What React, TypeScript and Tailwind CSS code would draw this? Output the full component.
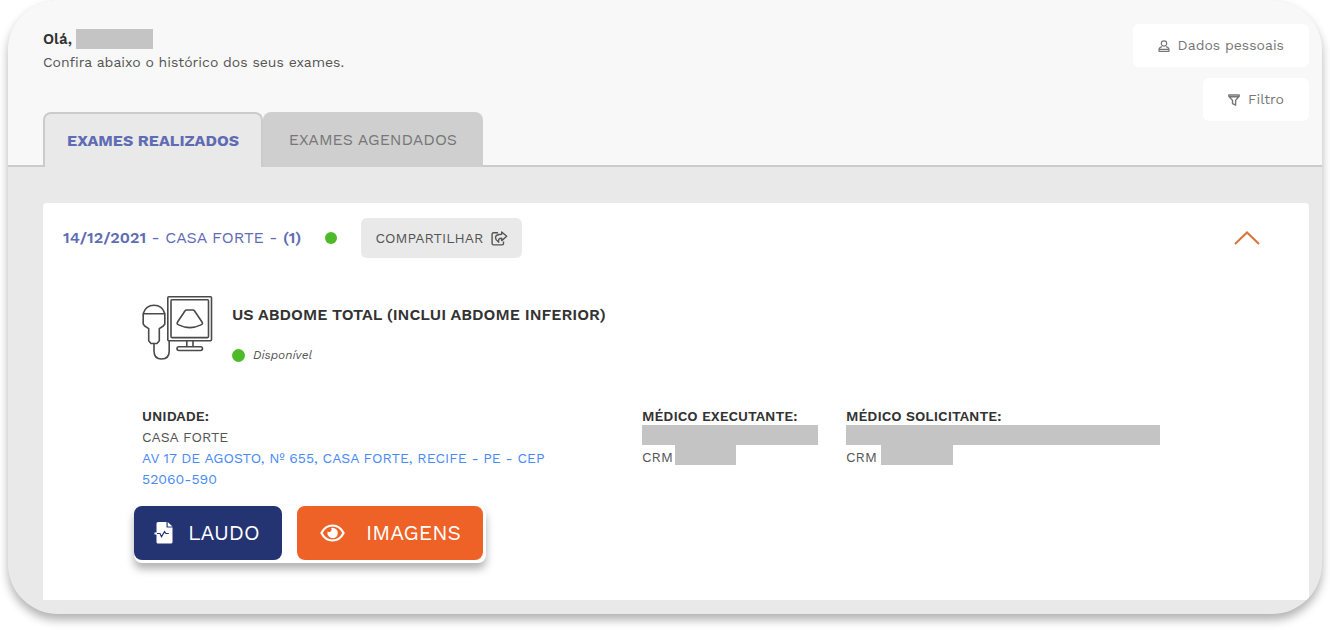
import React, { useState } from "react";

function PersonIcon() {
  return (
    <svg width="12" height="12" viewBox="0 0 12 12" fill="none" stroke="currentColor" strokeWidth="1.2" strokeLinejoin="round" aria-hidden="true">
      <circle cx="6" cy="3.5" r="2.7" />
      <path d="M3.900 6.600C2 7.300 1 8.300 1 9.600v1.700h10V9.600c0-1.300-1-2.300-2.900-3M1 9.300h10" />
    </svg>
  );
}

function FunnelIcon() {
  return (
    <svg width="12" height="12" viewBox="0 0 12 12" fill="none" stroke="currentColor" strokeWidth="1.400" strokeLinejoin="round" aria-hidden="true">
      <path d="M.8 1h10.400v1.300L7.600 6.400v4.800L4.500 9.600V6.400L.8 2.300zM1.500 2.700h9" />
    </svg>
  );
}

function ShareIcon() {
  return (
    <svg width="17" height="15" viewBox="0 0 17 15" fill="none" stroke="currentColor" strokeWidth="1.400" strokeLinejoin="round" aria-hidden="true">
      <path d="M7 1.800H2.400a1.300 1.300 0 0 0-1.300 1.300v9.500a1.300 1.300 0 0 0 1.300 1.300h8.800a1.300 1.300 0 0 0 1.300-1.300V10.500" />
      <path d="M10.700 1l5 4.300-5 4.300V7.200c-2.600 0-3.600.8-3 4-2-1.300-3.200-2.600-3.200-4.400 0-2.600 2.200-3.500 6.200-3.500z" />
    </svg>
  );
}

function UltrasoundIcon() {
  return (
    <svg className="shrink-0" width="72" height="66" viewBox="0 0 72 66" fill="none" stroke="#4a4a4a" strokeWidth="1.600" strokeLinejoin="round" aria-hidden="true">
      <rect x="25.800" y="1.800" width="43.700" height="44" rx="1" />
      <rect x="29" y="4.800" width="37.500" height="37.800" rx="1" />
      <path d="M44.500 15h6.500q1 0 1.600 1L60 27c1 1.600.5 2.200-1 2.900q-11.200 5.400-22.400 0c-1.500-.7-2-1.300-1-2.900l7.300-11q.6-1 1.600-1z" />
      <path d="M44.800 46v5.500M51 46v5.500" />
      <rect x="35" y="51.700" width="25.500" height="3.800" rx="1.900" />
      <path d="M1.200 18.500C2.800 13.500 6.500 10.300 12 10.300s9.300 3.200 10.800 8.200V29l-1.500 2-4 2.600v12.200l-2.300 2.700H9l-2.300-2.700V33.600l-4-2.600-1.500-2zM1.200 18.700h21.600" />
      <path d="M12 48.500V56q0 8 7.600 8t7.600-8V46" />
    </svg>
  );
}

function ReportIcon() {
  return (
    <svg width="20" height="22" viewBox="0 0 20 22" aria-hidden="true">
      <path fill="#fff" d="M2.500 1.500A1.500 1.500 0 0 1 4 0h8.500v5.500h6V20a1.500 1.500 0 0 1-1.500 1.500H4A1.500 1.500 0 0 1 2.500 20z" />
      <path fill="#fff" d="M13.700 0l4.800 4.500h-4.800z" />
      <path fill="#fff" d="M.5 10.500h3v2h-3z" />
      <path d="M3 11.500h3l1.500 3.200 3-5 1.300 1.800h3" fill="none" stroke="#243473" strokeWidth="1.200" />
    </svg>
  );
}

function EyeIcon() {
  return (
    <svg width="25" height="18" viewBox="0 0 25 18" aria-hidden="true">
      <path d="M1.400 9C4 4 8 1.500 12.500 1.500S21 4 23.600 9C21 14 17 16.500 12.500 16.500S4 14 1.400 9z" fill="none" stroke="#fff" strokeWidth="2.200" strokeLinejoin="round" />
      <path d="M12.600 3.800a5.200 5.200 0 1 1-5 3.800 2.600 2.600 0 0 0 3.600-3.600q.7-.2 1.400-.2z" fill="#fff" />
    </svg>
  );
}

function Doctor({ label, nameClass, crmClass }: { label: string; nameClass: string; crmClass: string }) {
  return (
    <div>
      <h3 className="font-semibold text-[#333]">{label}</h3>
      <div className={"-mt-0.5 h-5 max-w-full bg-[#c4c4c4] " + nameClass} />
      <div className="flex">
        <span className="pt-0.5">CRM</span>
        <div className={"h-5 bg-[#c4c4c4] " + crmClass} />
      </div>
    </div>
  );
}

export default function App() {
  const [tab, setTab] = useState("done");
  const [open, setOpen] = useState(true);
  const active = "border-2 border-b-0 border-[#cbcbcb] bg-[#e9e9e9] font-bold text-[#5f6cb3]";
  const inactive = "bg-[#cfcfcf] text-[#777]";
  return (
    <div className="bg-white px-2 pb-4 font-['Work_Sans','Inter',sans-serif] text-[#555]">
      <main className="overflow-hidden rounded-[50px] bg-[#e9e9e9] pb-[14px] shadow-[0_6px_10px_rgba(0,0,0,0.3)]">
        <header className="bg-[#f8f8f8]">
          <div className="flex h-[112px] justify-between pl-[35px] pr-[13px]">
            <div className="pt-7">
              <h1 className="flex items-center gap-1 text-[15px] font-semibold leading-[22px] text-[#333]">
                Olá, <span className="h-5 w-[77px] bg-[#c4c4c4]" />
              </h1>
              <p className="text-[14px] leading-6">Confira abaixo o histórico dos seus exames.</p>
            </div>
            <div className="flex flex-col items-end gap-[11px] pt-6 text-[14px] text-[#777]">
              <button className="flex h-[43px] shrink-0 items-center gap-2 rounded-md bg-white px-[25px]">
                <PersonIcon /> Dados pessoais
              </button>
              <button className="flex h-[43px] shrink-0 items-center gap-2 rounded-md bg-white px-[25px]">
                <FunnelIcon /> Filtro
              </button>
            </div>
          </div>
          <div className="flex" role="tablist">
            <div className="w-[35px] border-b-2 border-[#cbcbcb]" />
            <button role="tab" aria-selected={tab === "done"} onClick={() => setTab("done")} className={"h-[55px] w-[220px] rounded-t-lg text-[16px] " + (tab === "done" ? active : inactive)}>
              EXAMES REALIZADOS
            </button>
            <button role="tab" aria-selected={tab === "next"} onClick={() => setTab("next")} className={"h-[55px] w-[220px] rounded-t-lg text-[16px] " + (tab === "next" ? active : inactive)}>
              EXAMES AGENDADOS
            </button>
            <div className="flex-1 border-b-2 border-[#cbcbcb]" />
          </div>
        </header>

        <section className="ml-[35px] mr-[13px] mt-9 rounded-t-sm bg-white pb-[37px]">
          <div className="flex items-center pl-5 pr-[49px] pt-[15px]">
            <h2 className="text-[16px] font-normal text-[#5f6cb3]">
              <b className="font-semibold">14/12/2021</b> - CASA FORTE - <b className="font-semibold">(1)</b>
            </h2>
            <span className="ml-6 size-3 rounded-full bg-[#4fba29]" />
            <button className="ml-6 flex h-10 w-[161px] items-center justify-center gap-2 rounded-md bg-[#e9e9e9] text-[14px]">
              COMPARTILHAR <ShareIcon />
            </button>
            <button className="ml-auto text-[#d9743c]" aria-label="Recolher" aria-expanded={open} onClick={() => setOpen(!open)}>
              <svg width="26" height="14" viewBox="0 0 26 14" fill="none" stroke="currentColor" strokeWidth="2" aria-hidden="true">
                <path d={open ? "M1 13L13 1.500 25 13" : "M1 1l12 11.500L25 1"} />
              </svg>
            </button>
          </div>

          {open && (
            <div className="pl-[99px] pr-8 pt-[37px]">
              <div className="flex gap-[18px]">
                <UltrasoundIcon />
                <div className="pt-2.5">
                  <h3 className="text-[16px] font-semibold leading-5 text-[#333]">US ABDOME TOTAL (INCLUI ABDOME INFERIOR)</h3>
                  <p className="mt-5 flex items-center gap-2 text-[12px] italic leading-5">
                    <span className="size-[13px] rounded-full bg-[#4fba29]" />
                    Disponível
                  </p>
                </div>
              </div>

              <div className="mt-[41px] grid grid-cols-[minmax(0,500px)_204px_minmax(0,1fr)] text-[14px] leading-[21px]">
                <div>
                  <h3 className="font-semibold text-[#333]">UNIDADE:</h3>
                  <p>CASA FORTE</p>
                  <a href="#mapa" className="block max-w-[420px] text-[#4a8af4]">
                    AV 17 DE AGOSTO, Nº 655, CASA FORTE, RECIFE - PE - CEP 52060-590
                  </a>
                </div>
                <Doctor label="MÉDICO EXECUTANTE:" nameClass="w-44" crmClass="ml-0.5 w-[61px]" />
                <Doctor label="MÉDICO SOLICITANTE:" nameClass="w-[314px]" crmClass="ml-1 w-[72px]" />
              </div>

              <div className="-ml-2 mt-4 flex w-fit gap-[15px] rounded-lg bg-white pb-[3px] pr-[3px] text-[21px] text-white shadow-[0_6px_8px_rgba(0,0,0,0.3)]">
                <button className="flex h-[54px] w-[148px] items-center gap-[14px] rounded-lg bg-[#243473] pl-5">
                  <ReportIcon /> LAUDO
                </button>
                <button className="flex h-[54px] w-[186px] items-center gap-[21px] rounded-lg bg-[#ee6227] pl-[23px]">
                  <EyeIcon /> IMAGENS
                </button>
              </div>
            </div>
          )}
        </section>
      </main>
    </div>
  );
}
